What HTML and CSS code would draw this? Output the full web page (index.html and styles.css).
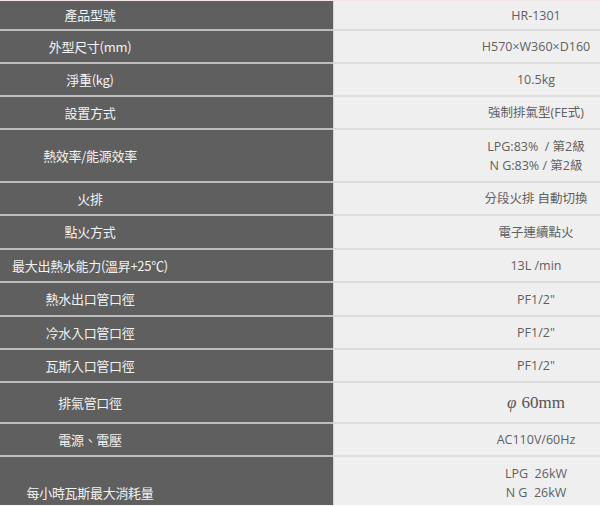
FILE: index.html
```html
<!DOCTYPE html>
<html lang="zh-Hant">
<head>
<meta charset="utf-8">
<title>規格表</title>
<link rel="stylesheet" href="styles.css">
</head>
<body>
<div class="spec">
  <div class="row h31"><div class="k">產品型號</div><div class="v">HR-1301</div></div>
  <div class="row h33"><div class="k">外型尺寸(mm)</div><div class="v">H570×W360×D160</div></div>
  <div class="row h33"><div class="k">淨重(kg)</div><div class="v">10.5kg</div></div>
  <div class="row h33"><div class="k">設置方式</div><div class="v">強制排氣型(FE式)</div></div>
  <div class="row h53"><div class="k">熱效率/能源效率</div><div class="v">LPG:83% &nbsp;/ 第2級<br>N G:83% / 第2級</div></div>
  <div class="row h33"><div class="k">火排</div><div class="v">分段火排 自動切換</div></div>
  <div class="row h34"><div class="k">點火方式</div><div class="v">電子連續點火</div></div>
  <div class="row h33"><div class="k">最大出熱水能力(溫昇+25℃)</div><div class="v">13L /min</div></div>
  <div class="row h34"><div class="k">熱水出口管口徑</div><div class="v">PF1/2"</div></div>
  <div class="row h33"><div class="k">冷水入口管口徑</div><div class="v">PF1/2"</div></div>
  <div class="row h33"><div class="k">瓦斯入口管口徑</div><div class="v">PF1/2"</div></div>
  <div class="row h41"><div class="k">排氣管口徑</div><div class="v serif"><span class="phi">φ</span>60mm</div></div>
  <div class="row h33"><div class="k">電源、電壓</div><div class="v">AC110V/60Hz</div></div>
  <div class="row h49 last"><div class="k low">每小時瓦斯最大消耗量</div><div class="v">LPG &nbsp;26kW<br>N G &nbsp;26kW</div></div>
</div>
</body>
</html>
```
FILE: styles.css
```css
html, body {
  margin: 0;
  padding: 0;
  background: #ffffff;
}
.spec {
  width: 600px;
  font-family: "Noto Sans CJK TC", "Noto Sans", sans-serif;
  border-top: 1px solid #f3e6e8;
}
.row {
  display: grid;
  grid-template-columns: 333px 1fr;
  box-sizing: border-box;
}
.h31 { height: 30px; }
.h33 { height: 33px; }
.h34 { height: 34px; }
.h41 { height: 41px; }
.h49 { height: 49px; }
.h53 { height: 53px; }
.k {
  background: #5f5f5f;
  color: #f2f2f2;
  font-size: 13px;
  line-height: 16px;
  text-align: center;
  box-sizing: border-box;
  padding-right: 153px;
  border-bottom: 2px solid #bdbdbd;
  display: flex;
  align-items: center;
  justify-content: center;
  white-space: nowrap;
  letter-spacing: -0.3px;
}
.v {
  background: #efefef;
  color: #5f5f5f;
  font-family: "Open Sans", "Noto Sans CJK TC", sans-serif;
  font-size: 12.5px;
  line-height: 19px;
  text-align: center;
  box-sizing: border-box;
  padding-left: 138px;
  border-left: 1px solid #d6d6d6;
  border-bottom: 2px solid #dcdcdc;
  display: flex;
  align-items: center;
  justify-content: center;
  white-space: nowrap;
}
.v.serif {
  font-family: "Liberation Serif", "DejaVu Serif", serif;
  font-size: 17px;
  color: #555555;
}
.phi {
  font-style: italic;
  margin-right: 5px;
}
.last .k, .last .v {
  border-bottom: 1px solid #ffffff;
}
.last .v {
  padding-top: 4px;
}
.k.low {
  align-items: flex-end;
  padding-bottom: 4px;
}
```
